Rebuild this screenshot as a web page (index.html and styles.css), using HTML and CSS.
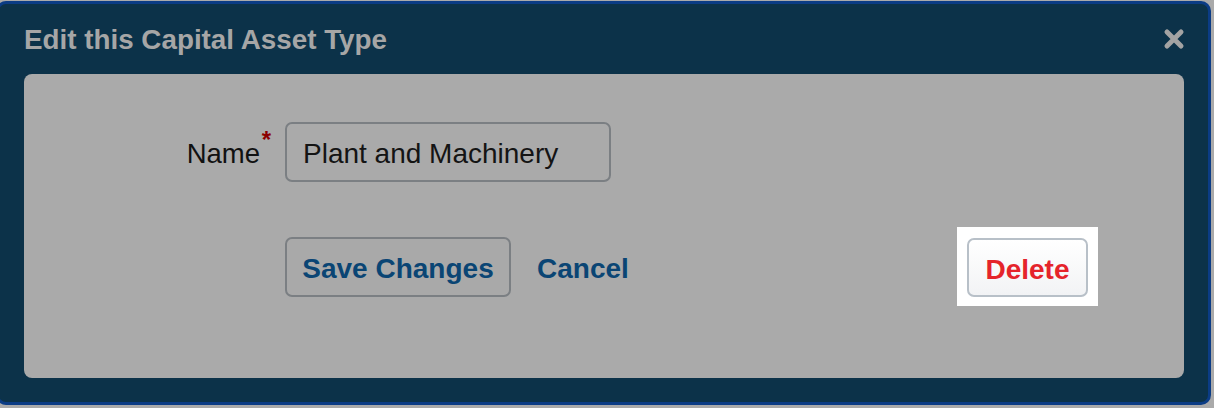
FILE: index.html
```html
<!DOCTYPE html>
<html lang="en">
<head>
  <meta charset="UTF-8">
  <title>Edit this Capital Asset Type</title>
  <link rel="stylesheet" href="styles.css">
</head>
<body>
  <div class="dialog">
    <div class="dialog-header">
      <h2>Edit this Capital Asset Type</h2>
      <button class="close-btn" title="Close">
        <svg width="22" height="22" viewBox="0 0 22 22">
          <path d="M4 4 L18 18 M18 4 L4 18" stroke="#a3a3a3" stroke-width="5" stroke-linecap="round"/>
        </svg>
      </button>
    </div>

    <div class="panel">
      <div class="form-row">
        <label class="field-label" for="nome">Name<span class="required">*</span></label>
        <input type="text" id="nome" class="field-input" value="Plant and Machinery">
      </div>

      <div class="form-row actions">
        <div class="field-label"></div>
        <button class="btn-save">Save Changes</button>
        <a href="#" class="btn-cancel">Cancel</a>
        <div class="spacer"></div>
        <div class="highlight">
          <button class="btn-delete">Delete</button>
        </div>
      </div>
    </div>
  </div>
</body>
</html>
```

FILE: styles.css
```css
    body {
      margin: 0;
      background-color: #aaaaaa;
      font-family: 'Liberation Sans', Arial, Helvetica, sans-serif;
      overflow: hidden;
    }

    .dialog {
      margin: 1px 3px 0 -4px;
      height: 398px;
      background-color: #0c3249;
      border: 3px solid #0b3c85;
      border-radius: 10px;
      padding: 0 24px 0 25px;
    }

    .dialog-header {
      display: flex;
      align-items: center;
      justify-content: space-between;
      height: 70px;
    }

    .dialog-header h2 {
      margin: 0;
      padding-top: 1px;
      font-size: 27.8px;
      font-weight: bold;
      color: #a6a6a6;
    }

    .close-btn {
      background: none;
      border: none;
      padding: 0;
      margin-right: -1px;
      cursor: pointer;
      display: flex;
    }

    .panel {
      background-color: #aaaaaa;
      border-radius: 8px;
      height: 304px;
      padding-top: 48px;
      box-sizing: border-box;
      padding-right: 86px;
    }

    .form-row {
      display: flex;
      align-items: center;
    }

    .field-label {
      width: 236px;
      flex-shrink: 0;
      text-align: right;
      font-size: 27.5px;
      color: #111;
      margin-right: 25px;
      padding-top: 3px;
      position: relative;
    }

    .required {
      position: absolute;
      top: -9px;
      right: -11px;
      color: #8c0000;
      font-size: 24px;
      font-weight: bold;
    }

    .field-input {
      width: 326px;
      height: 60px;
      box-sizing: border-box;
      border: 2px solid #7b7f83;
      border-radius: 7px;
      background-color: #aaaaaa;
      padding: 3px 16px 0 16px;
      font-family: inherit;
      font-size: 28px;
      color: #141414;
    }

    .actions {
      margin-top: 45px;
    }

    .btn-save {
      width: 226px;
      height: 60px;
      border: 2px solid #7b7f83;
      border-radius: 7px;
      background-color: #a9a9a9;
      color: #0a4574;
      font-family: inherit;
      font-size: 28px;
      font-weight: bold;
      padding: 4px 0 0 0;
      cursor: pointer;
    }

    .btn-cancel {
      margin-left: 26px;
      padding-top: 4px;
      color: #0a4574;
      font-size: 28px;
      font-weight: bold;
      text-decoration: none;
    }

    .spacer {
      flex: 1;
    }

    .highlight {
      background-color: #fff;
      padding: 11px 10px 9px 10px;
    }

    .btn-delete {
      width: 121px;
      height: 59px;
      border: 2px solid #b8c0c8;
      border-radius: 7px;
      background: linear-gradient(to bottom, #ffffff, #f2f3f5);
      color: #e5242b;
      font-family: inherit;
      font-size: 28px;
      font-weight: bold;
      padding: 4px 0 0 0;
      cursor: pointer;
    }
```
